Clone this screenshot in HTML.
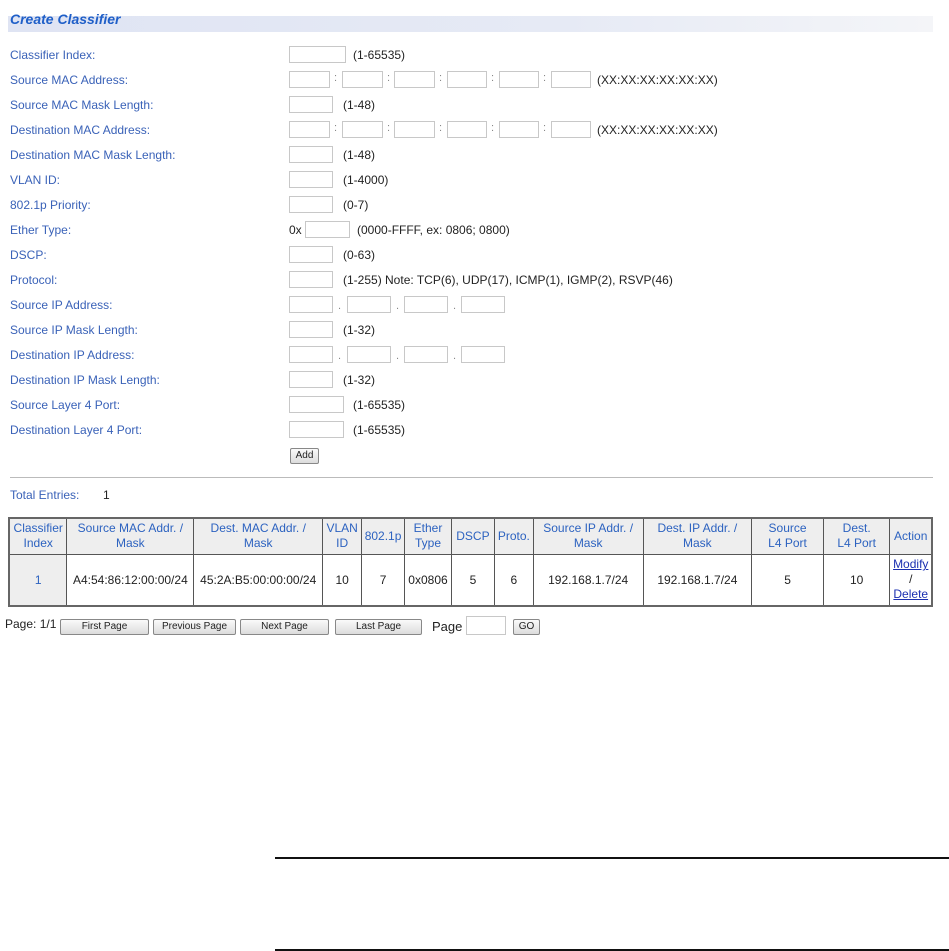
<!DOCTYPE html>
<html><head><meta charset="utf-8"><style>
*{margin:0;padding:0;box-sizing:border-box}
body{width:949px;height:951px;background:#fff;position:relative;font-family:"Liberation Sans",Arial,sans-serif;font-size:12px;color:#222;overflow:hidden}
.a{position:absolute;white-space:nowrap}
.bar{left:8px;top:16px;width:925px;height:16px;background:linear-gradient(to right,#dfe4f3,#e6eaf5 60%,#f4f5f8)}
.title{left:10px;top:11px;font-weight:bold;font-style:italic;font-size:14px;color:#1f5fc8}
.lbl{left:10px;color:#3a62b8;font-size:12px}
.in{position:absolute;height:17px;border:1px solid #c8c8c8;background:#fff}
.t{font-size:12px;color:#222}
.sep{font-size:11px;color:#888}
.btn{position:absolute;height:16px;border:1px solid #888;border-radius:2px;background:linear-gradient(#fafafa,#dcdcdc);font-size:10px;text-align:center;line-height:14px;color:#222}
table{position:absolute;left:8px;top:517px;width:925px;border-collapse:collapse;border:2px solid #666}
td{border:1px solid #555;text-align:center;font-size:12px;padding:0}
tr.h td{background:#eee;color:#2c62c0;height:36px;line-height:15px}
tr.d td{height:52px;color:#222}
a{color:#1a2fb0;text-decoration:underline}
.line{position:absolute;left:275px;width:674px;height:2px;background:#111}
</style></head><body>
<div class="a bar"></div>
<div class="a title">Create Classifier</div>

<div class="a lbl" style="top:48px">Classifier Index:</div>
<div class="a lbl" style="top:73px">Source MAC Address:</div>
<div class="a lbl" style="top:98px">Source MAC Mask Length:</div>
<div class="a lbl" style="top:123px">Destination MAC Address:</div>
<div class="a lbl" style="top:148px">Destination MAC Mask Length:</div>
<div class="a lbl" style="top:173px">VLAN ID:</div>
<div class="a lbl" style="top:198px">802.1p Priority:</div>
<div class="a lbl" style="top:223px">Ether Type:</div>
<div class="a lbl" style="top:248px">DSCP:</div>
<div class="a lbl" style="top:273px">Protocol:</div>
<div class="a lbl" style="top:298px">Source IP Address:</div>
<div class="a lbl" style="top:323px">Source IP Mask Length:</div>
<div class="a lbl" style="top:348px">Destination IP Address:</div>
<div class="a lbl" style="top:373px">Destination IP Mask Length:</div>
<div class="a lbl" style="top:398px">Source Layer 4 Port:</div>
<div class="a lbl" style="top:423px">Destination Layer 4 Port:</div>

<!-- row 1 -->
<div class="in" style="left:289px;top:46px;width:57px"></div><div class="a t" style="left:353px;top:48px">(1-65535)</div>
<!-- MAC rows -->
<div class="in" style="left:289px;top:71px;width:41px"></div><div class="a sep" style="left:334px;top:72px">:</div>
<div class="in" style="left:342px;top:71px;width:41px"></div><div class="a sep" style="left:387px;top:72px">:</div>
<div class="in" style="left:394px;top:71px;width:41px"></div><div class="a sep" style="left:439px;top:72px">:</div>
<div class="in" style="left:447px;top:71px;width:40px"></div><div class="a sep" style="left:491px;top:72px">:</div>
<div class="in" style="left:499px;top:71px;width:40px"></div><div class="a sep" style="left:543px;top:72px">:</div>
<div class="in" style="left:551px;top:71px;width:40px"></div><div class="a t" style="left:597px;top:73px">(XX:XX:XX:XX:XX:XX)</div>
<div class="in" style="left:289px;top:96px;width:44px"></div><div class="a t" style="left:343px;top:98px">(1-48)</div>
<div class="in" style="left:289px;top:121px;width:41px"></div><div class="a sep" style="left:334px;top:122px">:</div>
<div class="in" style="left:342px;top:121px;width:41px"></div><div class="a sep" style="left:387px;top:122px">:</div>
<div class="in" style="left:394px;top:121px;width:41px"></div><div class="a sep" style="left:439px;top:122px">:</div>
<div class="in" style="left:447px;top:121px;width:40px"></div><div class="a sep" style="left:491px;top:122px">:</div>
<div class="in" style="left:499px;top:121px;width:40px"></div><div class="a sep" style="left:543px;top:122px">:</div>
<div class="in" style="left:551px;top:121px;width:40px"></div><div class="a t" style="left:597px;top:123px">(XX:XX:XX:XX:XX:XX)</div>
<div class="in" style="left:289px;top:146px;width:44px"></div><div class="a t" style="left:343px;top:148px">(1-48)</div>
<div class="in" style="left:289px;top:171px;width:44px"></div><div class="a t" style="left:343px;top:173px">(1-4000)</div>
<div class="in" style="left:289px;top:196px;width:44px"></div><div class="a t" style="left:343px;top:198px">(0-7)</div>
<div class="a t" style="left:289px;top:223px">0x</div><div class="in" style="left:305px;top:221px;width:45px"></div><div class="a t" style="left:357px;top:223px">(0000-FFFF, ex: 0806; 0800)</div>
<div class="in" style="left:289px;top:246px;width:44px"></div><div class="a t" style="left:343px;top:248px">(0-63)</div>
<div class="in" style="left:289px;top:271px;width:44px"></div><div class="a t" style="left:343px;top:273px">(1-255) Note: TCP(6), UDP(17), ICMP(1), IGMP(2), RSVP(46)</div>
<div class="in" style="left:289px;top:296px;width:44px"></div><div class="a sep" style="left:338px;top:300px">.</div>
<div class="in" style="left:347px;top:296px;width:44px"></div><div class="a sep" style="left:396px;top:300px">.</div>
<div class="in" style="left:404px;top:296px;width:44px"></div><div class="a sep" style="left:453px;top:300px">.</div>
<div class="in" style="left:461px;top:296px;width:44px"></div>
<div class="in" style="left:289px;top:321px;width:44px"></div><div class="a t" style="left:343px;top:323px">(1-32)</div>
<div class="in" style="left:289px;top:346px;width:44px"></div><div class="a sep" style="left:338px;top:350px">.</div>
<div class="in" style="left:347px;top:346px;width:44px"></div><div class="a sep" style="left:396px;top:350px">.</div>
<div class="in" style="left:404px;top:346px;width:44px"></div><div class="a sep" style="left:453px;top:350px">.</div>
<div class="in" style="left:461px;top:346px;width:44px"></div>
<div class="in" style="left:289px;top:371px;width:44px"></div><div class="a t" style="left:343px;top:373px">(1-32)</div>
<div class="in" style="left:289px;top:396px;width:55px"></div><div class="a t" style="left:353px;top:398px">(1-65535)</div>
<div class="in" style="left:289px;top:421px;width:55px"></div><div class="a t" style="left:353px;top:423px">(1-65535)</div>
<div class="btn" style="left:290px;top:448px;width:29px">Add</div>

<div class="a" style="left:10px;top:477px;width:923px;height:1px;background:#bbb"></div>
<div class="a lbl" style="top:488px">Total Entries:</div>
<div class="a t" style="left:103px;top:488px">1</div>

<table>
<colgroup><col style="width:58px"><col style="width:127px"><col style="width:129px"><col style="width:39px"><col style="width:43px"><col style="width:47px"><col style="width:43px"><col style="width:39px"><col style="width:110px"><col style="width:109px"><col style="width:72px"><col style="width:67px"><col style="width:42px"></colgroup>
<tr class="h"><td>Classifier<br>Index</td><td>Source MAC Addr. /<br>Mask</td><td>Dest. MAC Addr. /<br>Mask</td><td>VLAN<br>ID</td><td>802.1p</td><td>Ether<br>Type</td><td>DSCP</td><td>Proto.</td><td>Source IP Addr. /<br>Mask</td><td>Dest. IP Addr. /<br>Mask</td><td>Source<br>L4 Port</td><td>Dest.<br>L4 Port</td><td>Action</td></tr>
<tr class="d"><td style="background:#eee;color:#2c62c0">1</td><td>A4:54:86:12:00:00/24</td><td>45:2A:B5:00:00:00/24</td><td>10</td><td>7</td><td>0x0806</td><td>5</td><td>6</td><td>192.168.1.7/24</td><td>192.168.1.7/24</td><td>5</td><td>10</td><td style="line-height:15px"><a>Modify</a><br>/<br><a>Delete</a></td></tr>
</table>

<div class="a t" style="left:5px;top:617px">Page: 1/1</div>
<div class="btn" style="left:60px;top:619px;width:89px">First Page</div>
<div class="btn" style="left:153px;top:619px;width:83px">Previous Page</div>
<div class="btn" style="left:240px;top:619px;width:89px">Next Page</div>
<div class="btn" style="left:335px;top:619px;width:87px">Last Page</div>
<div class="a t" style="left:432px;top:619px;font-size:13px">Page</div>
<div class="in" style="left:466px;top:616px;width:40px;height:19px"></div>
<div class="btn" style="left:513px;top:619px;width:27px">GO</div>

<div class="line" style="top:857px"></div>
<div class="line" style="top:949px"></div>
</body></html>
